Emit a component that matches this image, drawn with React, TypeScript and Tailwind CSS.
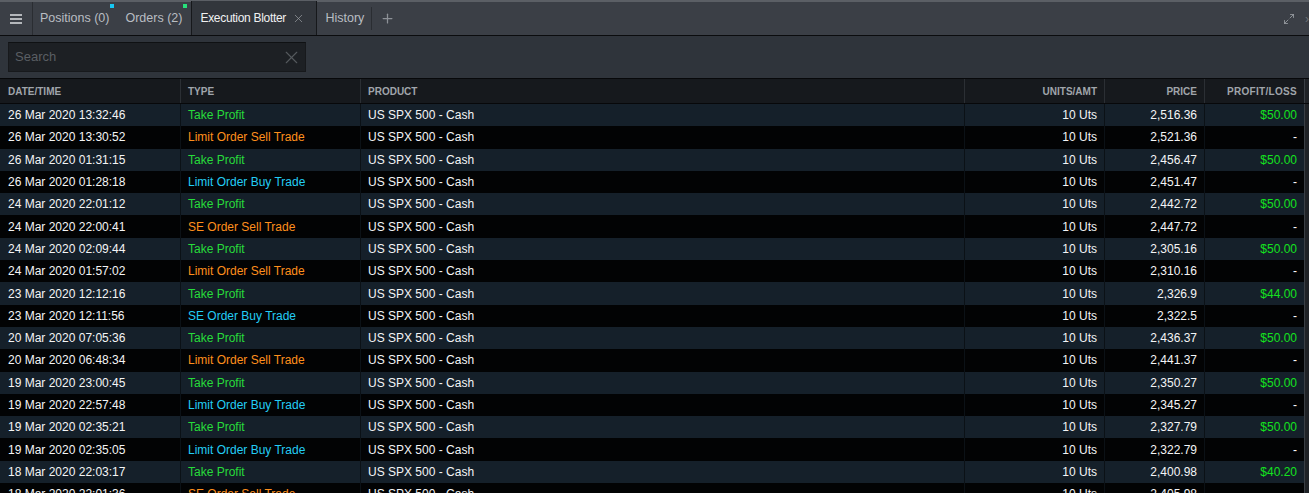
import { Maximize2, Plus, X } from "lucide-react"

type Kind = "tp" | "sell" | "buy"

type Row = {
  time: string
  type: string
  kind: Kind
  price: string
  pl: string
}

const rows: Row[] = [
  { time: "26 Mar 2020 13:32:46", type: "Take Profit", kind: "tp", price: "2,516.36", pl: "$50.00" },
  { time: "26 Mar 2020 13:30:52", type: "Limit Order Sell Trade", kind: "sell", price: "2,521.36", pl: "-" },
  { time: "26 Mar 2020 01:31:15", type: "Take Profit", kind: "tp", price: "2,456.47", pl: "$50.00" },
  { time: "26 Mar 2020 01:28:18", type: "Limit Order Buy Trade", kind: "buy", price: "2,451.47", pl: "-" },
  { time: "24 Mar 2020 22:01:12", type: "Take Profit", kind: "tp", price: "2,442.72", pl: "$50.00" },
  { time: "24 Mar 2020 22:00:41", type: "SE Order Sell Trade", kind: "sell", price: "2,447.72", pl: "-" },
  { time: "24 Mar 2020 02:09:44", type: "Take Profit", kind: "tp", price: "2,305.16", pl: "$50.00" },
  { time: "24 Mar 2020 01:57:02", type: "Limit Order Sell Trade", kind: "sell", price: "2,310.16", pl: "-" },
  { time: "23 Mar 2020 12:12:16", type: "Take Profit", kind: "tp", price: "2,326.9", pl: "$44.00" },
  { time: "23 Mar 2020 12:11:56", type: "SE Order Buy Trade", kind: "buy", price: "2,322.5", pl: "-" },
  { time: "20 Mar 2020 07:05:36", type: "Take Profit", kind: "tp", price: "2,436.37", pl: "$50.00" },
  { time: "20 Mar 2020 06:48:34", type: "Limit Order Sell Trade", kind: "sell", price: "2,441.37", pl: "-" },
  { time: "19 Mar 2020 23:00:45", type: "Take Profit", kind: "tp", price: "2,350.27", pl: "$50.00" },
  { time: "19 Mar 2020 22:57:48", type: "Limit Order Buy Trade", kind: "buy", price: "2,345.27", pl: "-" },
  { time: "19 Mar 2020 02:35:21", type: "Take Profit", kind: "tp", price: "2,327.79", pl: "$50.00" },
  { time: "19 Mar 2020 02:35:05", type: "Limit Order Buy Trade", kind: "buy", price: "2,322.79", pl: "-" },
  { time: "18 Mar 2020 22:03:17", type: "Take Profit", kind: "tp", price: "2,400.98", pl: "$40.20" },
  { time: "18 Mar 2020 22:01:36", type: "SE Order Sell Trade", kind: "sell", price: "2,405.98", pl: "-" },
]

const kindColor: Record<Kind, string> = {
  tp: "text-[#27dc3a]",
  sell: "text-[#ff8f1c]",
  buy: "text-[#22cdf5]",
}

const cols = "grid grid-cols-[181px_180px_604px_140px_100px_100px_1fr]"

export default function App() {
  return (
    <div className="h-[493px] w-[1309px] overflow-hidden bg-[#2f343b] font-['Liberation_Sans',Arial,sans-serif]">
      {/* tab strip */}
      <div className="flex h-[36px] items-stretch whitespace-nowrap border-t-2 border-[#5b5f65] border-b border-b-[#0b0c0e] bg-[#3b3f46]">
        <div className="flex w-[33px] items-center justify-center border-r border-[#2a2d32]">
          <div className="flex flex-col gap-[2px]">
            <span className="block h-[2px] w-[12px] bg-[#b4b7bb]" />
            <span className="block h-[2px] w-[12px] bg-[#b4b7bb]" />
            <span className="block h-[2px] w-[12px] bg-[#b4b7bb]" />
          </div>
        </div>
        <div className="relative flex items-center pl-[7px] pr-[10px] text-[12.5px] text-[#b9bdc2]">
          Positions (0)
          <span className="absolute right-[5px] top-[2px] h-[4px] w-[4px] bg-[#16c6f2]" />
        </div>
        <div className="relative flex items-center pl-[6px] pr-[9px] text-[12.5px] text-[#b9bdc2]">
          Orders (2)
          <span className="absolute right-[4px] top-[2px] h-[4px] w-[4px] bg-[#27e07a]" />
        </div>
        <div className="-mt-[1px] flex w-[126px] items-center gap-[6px] border-x border-[#16181b] bg-[#32363c] pl-[8px] text-[12px] tracking-[-0.3px] text-[#f0f1f2]">
          Execution Blotter
          <X size={13} strokeWidth={1.3} className="text-[#9a9ea3]" />
        </div>
        <div className="flex items-center pl-[8px] pr-[7px] text-[12.5px] text-[#b9bdc2]">History</div>
        <div className="my-[5px] w-px bg-[#2a2d32]" />
        <div className="flex items-center pl-[8px] text-[#8d9197]">
          <Plus size={15} strokeWidth={2} />
        </div>
        <div className="flex-1" />
        <div className="flex items-center gap-[10px] text-[#a6aaaf]">
          <Maximize2 size={12} strokeWidth={1.5} />
          <span className="text-[12px] text-[#6c7075]">›</span>
        </div>
      </div>

      {/* search */}
      <div className="flex h-[42px] items-start bg-[#2f343b] pl-[8px] pt-[6px]">
        <div className="flex h-[30px] w-[298px] items-center justify-between border border-[#17191c] border-t-[#0f1113] bg-[#1d2024] pl-[6px] pr-[3px]">
          <span className="text-[13px] text-[#5a5e63]">Search</span>
          <X size={21} strokeWidth={1.3} className="text-[#55595e]" />
        </div>
      </div>

      {/* header */}
      <div className={`${cols} h-[26px] border-t border-b border-[#07080a] bg-[#16191d] text-[10px] font-bold text-[#a0a5ab]`}>
        <div className="flex items-center border-r border-[#2b2f34] pl-[8px]">DATE/TIME</div>
        <div className="flex items-center border-r border-[#2b2f34] pl-[7px]">TYPE</div>
        <div className="flex items-center border-r border-[#2b2f34] pl-[7px]">PRODUCT</div>
        <div className="flex items-center justify-end border-r border-[#2b2f34] pr-[7px]">UNITS/AMT</div>
        <div className="flex items-center justify-end border-r border-[#2b2f34] pr-[7px]">PRICE</div>
        <div className="flex items-center justify-end border-r border-[#3a3f45] pr-[7px] tracking-[0.3px]">PROFIT/LOSS</div>
        <div className="bg-[#1f2226]" />
      </div>

      {/* rows */}
      <div className="text-[12px] text-[#f4f5f6]">
        {rows.map((r, i) => (
          <div
            key={i}
            className={`${cols} h-[22.3px] whitespace-nowrap ${i % 2 === 0 ? "bg-[#15202a]" : "bg-[#020304]"}`}
          >
            <div className="flex items-center border-r border-[#0b1116] pl-[8px]">{r.time}</div>
            <div className={`flex items-center border-r border-[#0b1116] pl-[7px] ${kindColor[r.kind]}`}>{r.type}</div>
            <div className="flex items-center border-r border-[#0b1116] pl-[7px]">US SPX 500 - Cash</div>
            <div className="flex items-center justify-end border-r border-[#0b1116] pr-[7px]">10 Uts</div>
            <div className="flex items-center justify-end border-r border-[#0b1116] pr-[7px]">{r.price}</div>
            <div
              className={`flex items-center justify-end border-r border-[#3a3f45] pr-[7px] ${
                r.pl === "-" ? "text-white" : "text-[#14e21f]"
              }`}
            >
              {r.pl}
            </div>
            <div className="bg-[#1f2226]" />
          </div>
        ))}
      </div>
    </div>
  )
}
